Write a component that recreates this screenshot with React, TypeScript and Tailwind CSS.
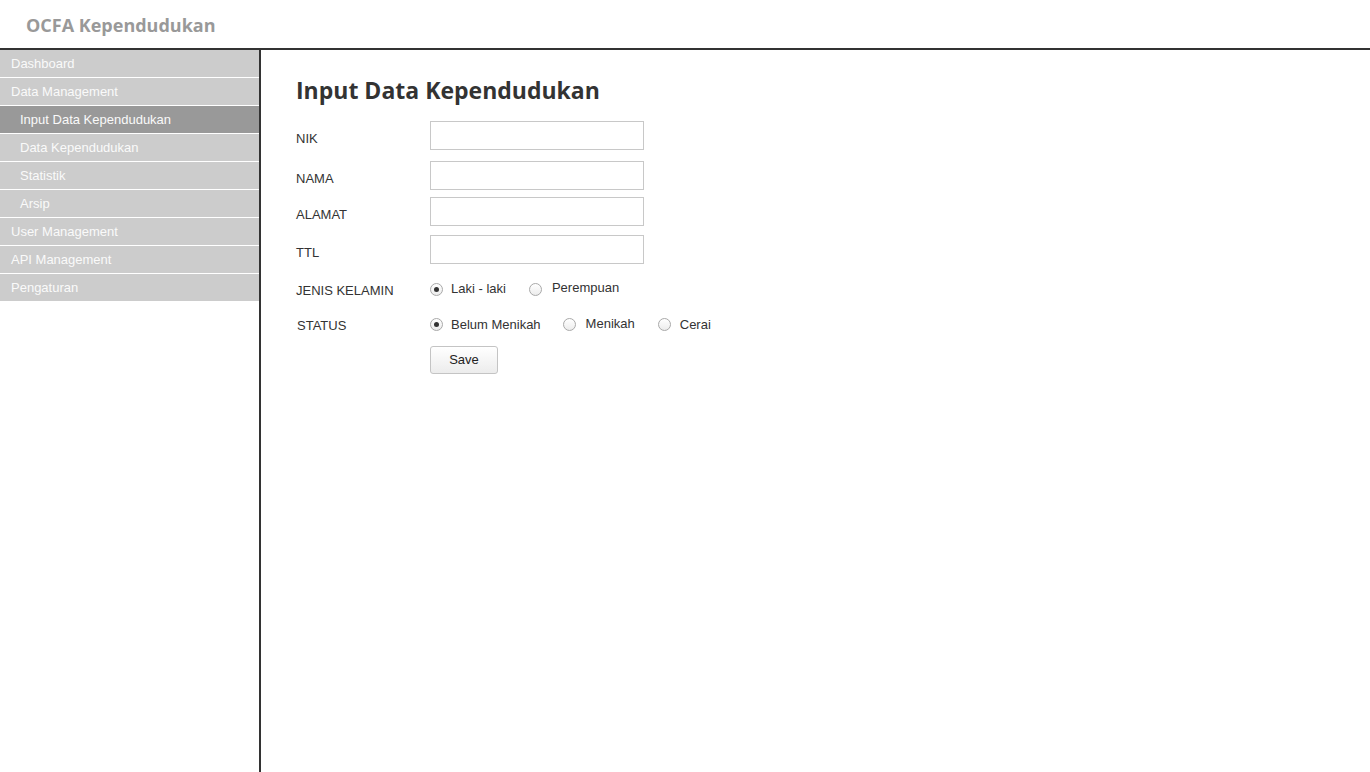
import React from "react";

const navItems = [
  { label: "Dashboard", sub: false, active: false },
  { label: "Data Management", sub: false, active: false },
  { label: "Input Data Kependudukan", sub: true, active: true },
  { label: "Data Kependudukan", sub: true, active: false },
  { label: "Statistik", sub: true, active: false },
  { label: "Arsip", sub: true, active: false },
  { label: "User Management", sub: false, active: false },
  { label: "API Management", sub: false, active: false },
  { label: "Pengaturan", sub: false, active: false },
];

function Radio({ checked }: { checked?: boolean }) {
  return (
    <span className="w-[13px] h-[13px] rounded-full border border-[#a9a9a9] bg-gradient-to-b from-white to-[#ececec] flex items-center justify-center shrink-0">
      {checked && <span className="w-[5px] h-[5px] rounded-full bg-[#333]" />}
    </span>
  );
}

function InputRow({ label, mt }: { label: string; mt: string }) {
  return (
    <div className={`flex items-center ${mt}`}>
      <span className="w-[134px] pt-[7px] text-[13px] text-[#333]">{label}</span>
      <input
        type="text"
        className="w-[214px] h-[29px] border border-[#c8c8c8] bg-white outline-none px-1 text-[13px]"
      />
    </div>
  );
}

export default function App() {
  return (
    <div
      className="h-screen flex flex-col bg-white"
      style={{ fontFamily: '"Liberation Sans", Arial, sans-serif' }}
    >
      <header className="h-[48px] flex items-center pl-[26px] shrink-0">
        <h1
          className="text-[18px] font-bold text-[#999999] pt-[2px]"
          style={{ fontFamily: '"Open Sans", "Noto Sans", sans-serif' }}
        >
          OCFA Kependudukan
        </h1>
      </header>
      <div className="flex flex-1 border-t-2 border-[#333]">
        <aside className="w-[259px] shrink-0">
          {navItems.map((it) => (
            <div
              key={it.label}
              className={`h-[28px] flex items-center border-b border-white text-[13px] text-[#fafafa] ${
                it.active ? "bg-[#999999]" : "bg-[#cccccc]"
              } ${it.sub ? "pl-[20px]" : "pl-[11px]"}`}
            >
              {it.label}
            </div>
          ))}
        </aside>
        <main className="flex-1 border-l-2 border-[#333] pl-[35px]">
          <h2
            className="mt-[24px] text-[23px] leading-[32px] font-bold text-[#333]"
            style={{ fontFamily: '"Open Sans", "Noto Sans", sans-serif' }}
          >
            Input Data Kependudukan
          </h2>
          <InputRow label="NIK" mt="mt-[15px]" />
          <InputRow label="NAMA" mt="mt-[11px]" />
          <InputRow label="ALAMAT" mt="mt-[7px]" />
          <InputRow label="TTL" mt="mt-[9px]" />
          <div className="flex items-center h-[20px] mt-[15px] text-[13px] text-[#333]">
            <span className="w-[134px] pt-[4px]">JENIS KELAMIN</span>
            <Radio checked />
            <span className="ml-[8px] pb-[1px]">Laki - laki</span>
            <span className="ml-[23px]">
              <Radio />
            </span>
            <span className="ml-[10px] pb-[2px]">Perempuan</span>
          </div>
          <div className="flex items-center h-[20px] mt-[15px] text-[13px] text-[#333]">
            <span className="w-[134px] pl-[1px] pt-[4px]">STATUS</span>
            <Radio checked />
            <span className="ml-[8px] pt-[2px]">Belum Menikah</span>
            <span className="ml-[22px]">
              <Radio />
            </span>
            <span className="ml-[10px]">Menikah</span>
            <span className="ml-[23px]">
              <Radio />
            </span>
            <span className="ml-[9px] pt-[2px]">Cerai</span>
          </div>
          <div className="mt-[12px] pl-[134px]">
            <button className="w-[68px] h-[28px] rounded-[3px] border border-[#c4c4c4] bg-gradient-to-b from-white to-[#ececec] text-[13px] text-[#222]">
              Save
            </button>
          </div>
        </main>
      </div>
    </div>
  );
}
